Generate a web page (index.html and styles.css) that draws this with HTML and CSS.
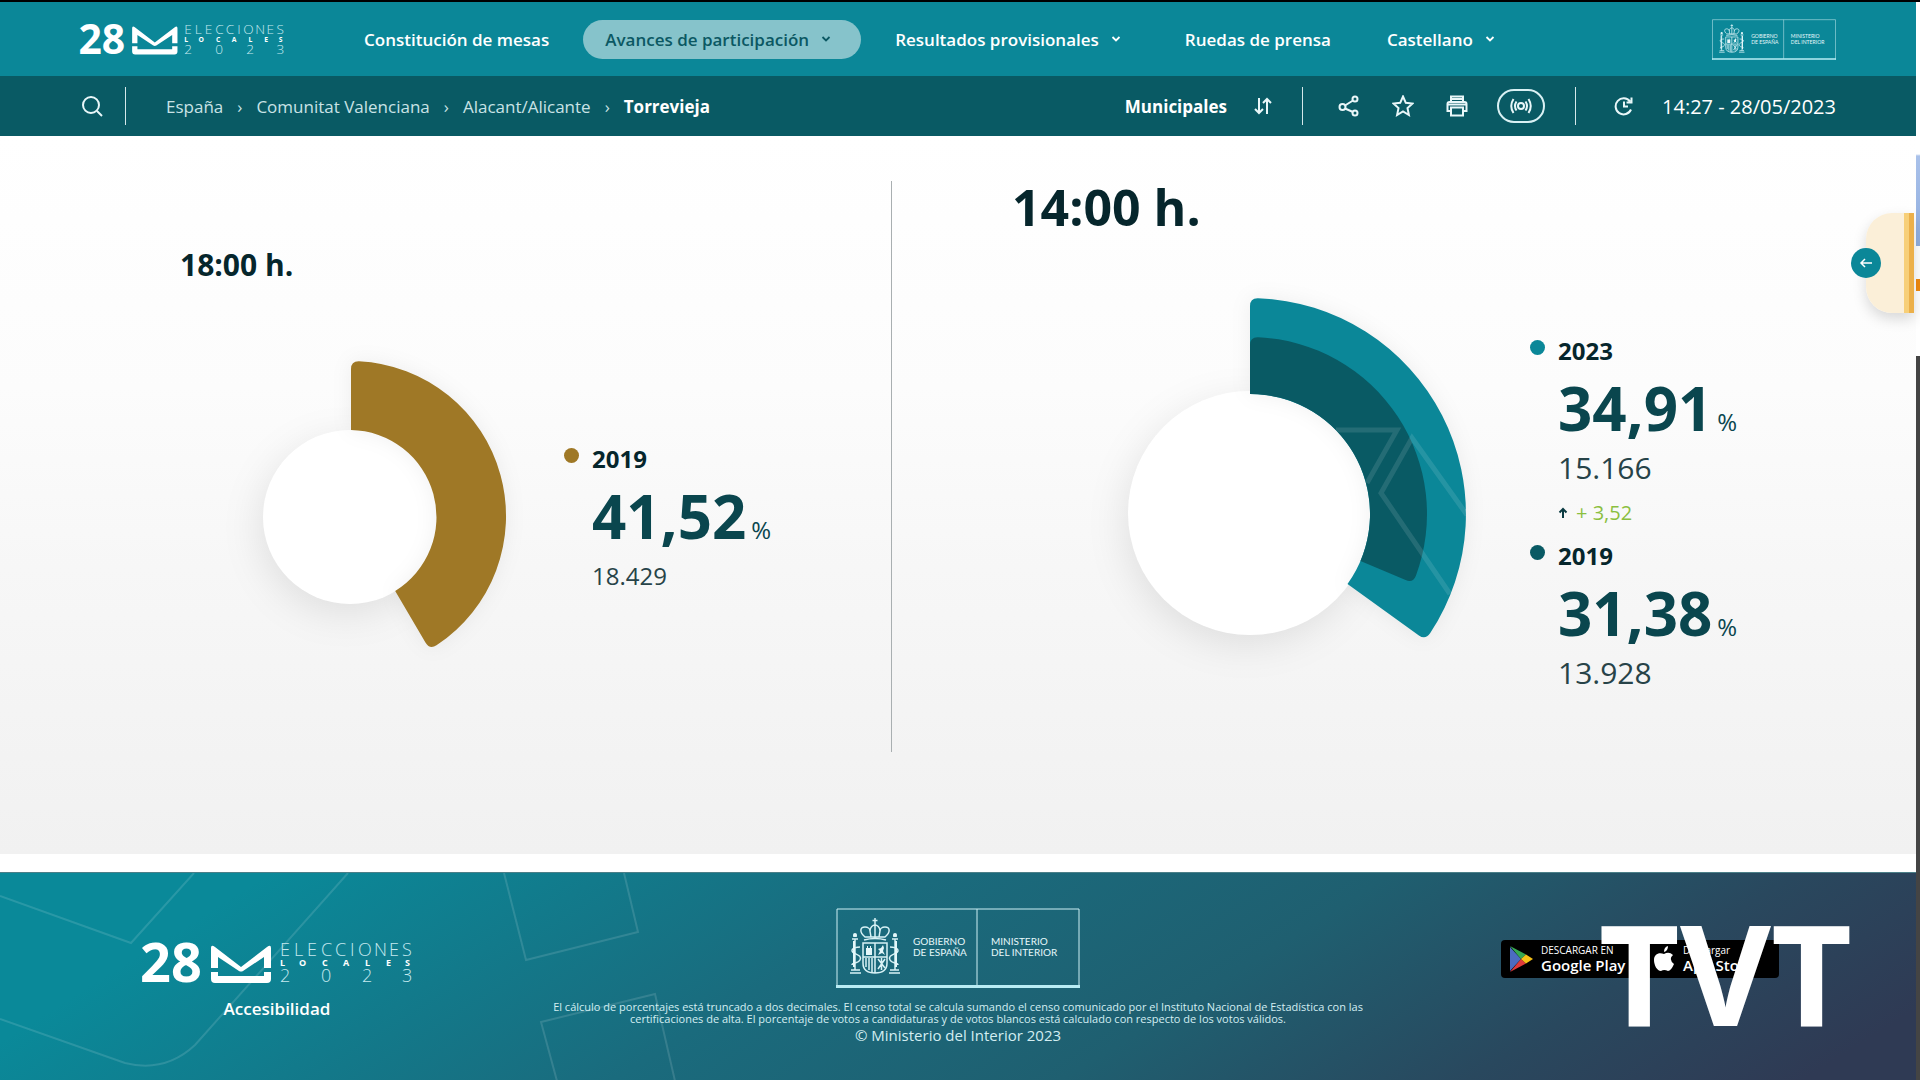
FILE: index.html
```html
<!DOCTYPE html>
<html lang="es">
<head>
<meta charset="utf-8">
<meta name="viewport" content="width=device-width, initial-scale=1">
<title>Elecciones Locales 2023 - Torrevieja</title>
<link rel="stylesheet" href="styles.css">
</head>
<body>
<svg class="defs" aria-hidden="true">
  <symbol id="logo" viewBox="0 0 270 40">
    <text class="logo-day" x="-2" y="39">28</text>
    <path d="M69 25V5q0-4 4-1L99 24 125 4q4-3 4 1V25h-7V14L101 28q-2 1-4 0L76 14V25zM69 29h7v4h46v-4h7v7q0 4-4 4H73q-4 0-4-4z" fill="#fff"/>
    <text class="logo-thin" x="138 152 165 179 193 208 216 232 247 260" y="13">ELECCIONES</text>
    <text class="logo-local" x="138 157 180 201 223 244 263" y="23">LOCALES</text>
    <text class="logo-thin" x="138 179 220 260" y="39">2023</text>
  </symbol>
  <symbol id="gov" viewBox="0 0 244 80">
    <g fill="none" stroke="#cdeff4">
      <path d="M1 80V1H243V80M141 1V78"/>
      <path d="M0 78.500H244" stroke="#b9ecf4" stroke-width="3"/>
    </g>
    <g fill="none" stroke="#d8f2f6" stroke-width="1.500">
      <path d="M39 10v7M36.500 12.500h5"/>
      <path d="M29 29c-6-5-5-10 0-10 3 0 5 2 5 4 0-4 3-6 5-6s5 2 5 6c0-2 2-4 5-4 5 0 6 5 0 10zM34 23l1 6M44 23l-1 6M39 17v12M28 32q11-3 22 0"/>
      <path d="M27 35h24v20q0 10-12 10T27 55zM39 35v30M27 49h24"/>
      <path d="M30 50v9M33 50v12M36 50v14M42 51l7 9M49 51l-7 10M45.500 50v12"/>
      <path d="M19 31v31M16 31h6M17 28h4M15 62h9M14 65h11M59 31v31M56 31h6M57 28h4M54 62h9M53 65h11"/>
      <path d="M24 39c-8 0-10 4-6 6s8 3 6 7-8 2-8 5M54 39c8 0 10 4 6 6s-8 3-6 7 8 2 8 5"/>
    </g>
    <g fill="#e4f7fa">
      <path d="M30 47v-7h1v-2h1v2h2v-2h1v2h1v7zM42 47l2-4-2-2 3-1 2-3 1 3-1 3 2 4-3-2z"/>
      <circle cx="19" cy="27" r="2"/><circle cx="59" cy="27" r="2"/>
      <path d="M17 33h2v26h-2zM59 33h2v26h-2z"/>
    </g>
    <text class="gov-text" x="77" y="37">GOBIERNO</text>
    <text class="gov-text" x="77" y="48">DE ESPAÑA</text>
    <text class="gov-text" x="155" y="37">MINISTERIO</text>
    <text class="gov-text" x="155" y="48">DEL INTERIOR</text>
  </symbol>
  <symbol id="chevron" viewBox="0 0 10 10"><path d="M1.500 3 5 6.500 8.500 3" fill="none" stroke="currentColor" stroke-width="1.800"/></symbol>
</svg>

<div class="frame">
  <div class="page">
    <header class="topbar">
      <a href="#" class="brand" aria-label="28M Elecciones Locales 2023"><svg class="brand-logo"><use href="#logo"/></svg></a>
      <nav class="nav">
        <a href="#" class="nav-item">Constitución de mesas</a>
        <button class="nav-item active">Avances de participación<svg class="chev"><use href="#chevron"/></svg></button>
        <button class="nav-item">Resultados provisionales<svg class="chev"><use href="#chevron"/></svg></button>
        <a href="#" class="nav-item">Ruedas de prensa</a>
        <button class="nav-item">Castellano<svg class="chev"><use href="#chevron"/></svg></button>
      </nav>
      <a href="#" class="gov-link" aria-label="Gobierno de España"><svg class="gov-small"><use href="#gov"/></svg></a>
    </header>

    <div class="subbar">
      <button class="icon-btn" aria-label="Buscar"><svg width="24" height="24" viewBox="0 0 24 24"><circle cx="11" cy="11" r="8"/><path d="M17 17l5 5"/></svg></button>
      <span class="rule rule-search"></span>
      <nav class="crumbs">
        <a href="#">España</a><span>›</span><a href="#">Comunitat Valenciana</a><span>›</span><a href="#">Alacant/Alicante</a><span>›</span><strong>Torrevieja</strong>
      </nav>
      <button class="election">Municipales<svg width="20" height="20" viewBox="0 0 20 20"><path d="M6 2v15M2 13l4 4 4-4M14 18V3M10 7l4-4 4 4"/></svg></button>
      <span class="rule"></span>
      <div class="tools">
        <button class="icon-btn" aria-label="Compartir"><svg width="22" height="22" viewBox="0 0 22 22"><circle cx="4.500" cy="12" r="3"/><circle cx="17" cy="4" r="2.500"/><circle cx="17" cy="18" r="2.500"/><path d="M7 10.500 15 5.500M7 13.500l8 3.500"/></svg></button>
        <button class="icon-btn" aria-label="Favoritos"><svg width="22" height="22" viewBox="0 0 22 22"><path d="M11 1.500l2.800 6.300 6.700.7-5 4.600 1.400 6.900-5.900-3.500L5.100 20l1.400-6.900-5-4.600 6.700-.7z"/></svg></button>
        <button class="icon-btn" aria-label="Imprimir"><svg width="22" height="22" viewBox="0 0 22 22"><path d="M5 7V1.500h12V7M5 16H1.500V9q0-2 2-2h15q2 0 2 2v7H17M5 12.500h12v8H5z"/><path d="M5 4h12M2 9.500h18" stroke-width="2"/></svg></button>
        <button class="live" aria-label="En directo"><svg width="22" height="18" viewBox="0 0 22 18"><circle cx="11" cy="9" r="3"/><path d="M6.500 4.500q-3 4.500 0 9M15.500 4.500q3 4.500 0 9M3.500 2q-4.500 7 0 14M18.500 2q4.500 7 0 14"/></svg></button>
      </div>
      <span class="rule"></span>
      <button class="icon-btn refresh" aria-label="Actualizar"><svg width="20" height="20" viewBox="0 0 20 20"><path d="M17 13.500A8 8 0 1 1 16 5.500M17.500 1.500V6.500H12.500M10 5.500V10.500H14"/></svg></button>
      <time datetime="2023-05-28T14:27">14:27 - 28/05/2023</time>
    </div>

    <main class="results">
      <section class="panel panel-past">
        <h2>18:00 h.</h2>
        <div class="chart-row">
          <svg class="donut" width="243" height="310" viewBox="0 0 243 310" role="img" aria-label="41,52 %">
            <circle class="hub" cx="87" cy="156" r="87"/>
            <path class="slice" fill="#9f7826" d="M88 69V8Q88 0 96 .2A155 155 0 0 1 173.500 284.300Q166.700 288.500 162.600 281.700L132.200 230A87 87 0 0 0 88 69z"/>
          </svg>
          <div class="legend">
            <h3><i class="dot gold"></i>2019</h3>
            <p class="pct">41,52<span>%</span></p>
            <p class="votes">18.429</p>
          </div>
        </div>
      </section>
      <section class="panel panel-now">
        <h2>14:00 h.</h2>
        <div class="chart-row">
          <svg class="donut" width="337" height="432" viewBox="0 0 337 432" role="img" aria-label="34,91 %">
            <clipPath id="slice-clip"><path d="M121 96V8Q121 0 129 .2A216 216 0 0 1 301.100 335.200Q296.400 342 289.900 337.400L218.500 286A120 120 0 0 0 121 96z"/></clipPath>
            <circle class="hub" cx="121" cy="215" r="122"/>
            <path class="slice" fill="#0b8798" d="M121 96V8Q121 0 129 .2A216 216 0 0 1 301.100 335.200Q296.400 342 289.900 337.400L218.500 286A120 120 0 0 0 121 96z"/>
            <path fill="#095a64" d="M121 96V47Q121 39 129 39.200A177 177 0 0 1 286.900 277.700Q283.900 285.200 276.600 282L231.500 262.900A120 120 0 0 0 121 96z"/>
            <path class="pattern" clip-path="url(#slice-clip)" d="M207 132H268L238 185M338 217 283 140 252 195 321 296"/>
          </svg>
          <div class="legend">
            <h3><i class="dot teal"></i>2023</h3>
            <p class="pct">34,91<span>%</span></p>
            <p class="votes">15.166</p>
            <p class="diff"><svg width="10" height="12" viewBox="0 0 10 12"><path d="M5 11V2M1.500 5.500 5 2l3.500 3.500" fill="none" stroke="#0b3b42" stroke-width="2"/></svg>+ 3,52</p>
            <h3><i class="dot deep"></i>2019</h3>
            <p class="pct">31,38<span>%</span></p>
            <p class="votes">13.928</p>
          </div>
        </div>
      </section>
      <aside class="drawer"><button aria-label="Abrir panel"><svg width="14" height="12" viewBox="0 0 14 12"><path d="M13 6H2M6 2 2 6l4 4" fill="none" stroke="#fff" stroke-width="1.500"/></svg></button></aside>
    </main>

    <footer class="footer">
      <svg class="footer-lines" viewBox="0 0 1916 208" preserveAspectRatio="xMinYMin slice" aria-hidden="true"><path d="M0 23 131 70 194 0M348 0 195 172Q165 200 125 190L0 146M504 0 526 87 638 59 624 0M557 208 541 149 655 121 675 208"/></svg>
      <div class="foot-brand">
        <svg class="foot-logo" role="img" aria-label="28M Elecciones Locales 2023"><use href="#logo"/></svg>
        <a href="#">Accesibilidad</a>
      </div>
      <div class="foot-center">
        <svg class="gov-large" role="img" aria-label="Gobierno de España, Ministerio del Interior"><use href="#gov"/></svg>
        <p class="legal">El cálculo de porcentajes está truncado a dos decimales. El censo total se calcula sumando el censo comunicado por el Instituto Nacional de Estadística con las certificaciones de alta. El porcentaje de votos a candidaturas y de votos blancos está calculado con respecto de los votos válidos.</p>
        <p class="copy">© Ministerio del Interior 2023</p>
      </div>
      <div class="stores">
        <a href="#" class="store"><svg width="24" height="28" viewBox="0 0 24 28"><path d="M1 2v24L12 14z" fill="#4c6cc0"/><path d="M1 1 17 9.500 12 14z" fill="#36a852"/><path d="M1 27 17 18.500 12 14z" fill="#df3b3b"/><path d="M17 9.500 24 14 17 18.500 12 14z" fill="#f6c117"/></svg><span><small>DESCARGAR EN</small><b>Google Play</b></span></a>
        <a href="#" class="store"><svg width="22" height="28" viewBox="0 0 22 28"><path d="M15 1q0 5-4 6 0-5 4-6zM11 9q5-3 9 1-5 4 1 9-3 7-6 7-4-2-7 0C4 26 1 20 1 15c0-6 5-8 10-6z" fill="#fff"/></svg><span><small>Descargar</small><b>App Store</b></span></a>
      </div>
      <div class="channel">TVT</div>
    </footer>
  </div>
  <div class="edge"></div>
</div>
</body>
</html>
```
FILE: styles.css
```css
* { box-sizing: border-box; }
body {
  margin: 0;
  font-family: "Open Sans", "Noto Sans", sans-serif;
  color: #06262c;
  background: #fff;
}
h2, h3, p { margin: 0; }
a { color: inherit; text-decoration: none; }
button { font: inherit; color: inherit; background: none; border: 0; padding: 0; cursor: pointer; }
svg { display: block; flex: none; }
symbol, .brand-logo, .foot-logo, .gov-small, .gov-large { overflow: visible; }
.defs { position: absolute; width: 0; height: 0; }

.frame { display: flex; min-height: 100vh; border-top: 2px solid #000; }
.page { flex: 1; min-width: 0; display: flex; flex-direction: column; }
.edge {
  width: 4px;
  background: linear-gradient(#fff 152px, #a9c1ea 154px, #8fadde 244px, #fff 244px, #fff 277px, #f08a10 277px, #f08a10 289px, #fff 289px, #fff 354px, #444 354px);
}

/* shared logos */
.logo-day { font: 700 54px "Open Sans", sans-serif; fill: #fff; }
.logo-thin { font: 300 18px "Open Sans", sans-serif; fill: #c5e9ef; }
.logo-local { font: 700 9px "Open Sans", sans-serif; fill: #fff; }
.gov-text { font: 400 10px Lato, sans-serif; fill: #e6f8fb; }

/* top bar */
.topbar { display: flex; align-items: center; height: 74px; padding: 0 80px; background: #0b8798; color: #fff; }
.brand-logo { width: 204px; height: 31px; }
.nav { display: flex; gap: 12px; margin-left: 58px; }
.nav-item { display: flex; align-items: center; gap: 12px; height: 39px; padding: 0 22px; border-radius: 20px; font-size: 17px; font-weight: 600; white-space: nowrap; }
.nav-item.active { background: #86c3cb; color: #0b5863; }
.chev { width: 10px; height: 10px; margin-right: 8px; }
.gov-link { margin-left: auto; }
.gov-small { width: 124px; height: 41px; }

/* location bar */
.subbar { display: flex; align-items: center; height: 60px; padding: 0 80px; background: #095a64; color: #fff; font-size: 17px; white-space: nowrap; }
.subbar svg { fill: none; stroke: #e9f7f9; stroke-width: 2; }
.rule { width: 1px; height: 38px; background: #d5e8ea; }
.rule-search { margin: 0 40px 0 21px; }
.crumbs { display: flex; gap: 14px; color: #c9e3e6; }
.crumbs strong { color: #fff; }
.election { display: flex; align-items: center; gap: 26px; margin: 0 29px 0 auto; font-weight: 700; }
.tools { display: flex; align-items: center; gap: 27px; margin: 0 30px 0 32px; }
.tools .icon-btn { display: grid; place-items: center; width: 27px; }
.live { display: grid; place-items: center; width: 48px; height: 34px; border: 2px solid #d9f1f4; border-radius: 17px; }
.refresh { margin: 0 28px 0 38px; }
.subbar time { font-size: 20px; }

/* results */
.results { position: relative; display: grid; grid-template-columns: 891fr 1025fr; padding: 45px 0 102px; background: linear-gradient(#fff, #fcfcfc 35%, #f7f7f7 60%, #f1f1f1); }
.panel-past { padding: 64px 0 0 180px; }
.panel-now { padding: 0 0 22px 120px; border-left: 1px solid #a9afb1; }
.panel-past h2 { font-size: 30px; line-height: 40px; }
.panel-now h2 { font-size: 50px; line-height: 52px; }
.chart-row { display: flex; align-items: flex-start; }
.panel-past .chart-row { gap: 58px; padding: 76px 0 0 83px; }
.panel-now .chart-row { gap: 64px; padding: 65px 0 0 117px; }
.donut { overflow: visible; }
.hub { fill: #fff; filter: drop-shadow(-4px 10px 18px rgba(0, 0, 0, .09)); }
.slice { filter: drop-shadow(0 0 10px rgba(0, 0, 0, .06)); }
.pattern { fill: none; stroke: #fff; stroke-opacity: .11; stroke-width: 5; }
.panel-past .legend { padding-top: 82px; }
.panel-now .legend { padding-top: 37px; }
.legend h3 { display: flex; gap: 13px; font-size: 24px; line-height: 32px; }
.dot { width: 15px; height: 15px; margin-top: 5px; border-radius: 50%; }
.gold { background: #9f7826; }
.teal { background: #0b8798; }
.deep { background: #095a64; }
.pct { display: flex; align-items: baseline; gap: 5px; margin: 5px 0 6px 28px; font-size: 60px; line-height: 72px; font-weight: 700; color: #0a464e; }
.pct span { font-size: 24px; line-height: 24px; font-weight: 400; }
.votes { margin-left: 28px; font-size: 24px; line-height: 36px; color: #274348; }
.panel-now .votes { font-size: 30px; }
.diff { display: flex; align-items: center; gap: 8px; margin: 13px 0 13px 28px; font-size: 20px; line-height: 28px; color: #8bbf3f; }

.drawer { position: absolute; top: 77px; right: 2px; width: 48px; height: 100px; border-radius: 26px 0 0 26px; border-right: 5px solid #ecb04a; background: linear-gradient(90deg, #fbefd8 38px, #f7cf78 38px); box-shadow: 0 6px 14px rgba(0, 0, 0, .15); }
.drawer button { position: absolute; left: -15px; top: 35px; display: grid; place-items: center; width: 30px; height: 30px; border-radius: 50%; background: #0b8798; }

/* footer */
.footer { position: relative; flex: 1; display: grid; grid-template-columns: 1fr auto 1fr; align-items: start; gap: 20px; margin-top: 18px; padding: 35px 137px 20px; border-top: 1px solid #4b7f88; background: linear-gradient(148deg, #0a8999 12%, #1a6b7d 42%, #1f5f70 62%, #29485e 80%, #2f3a54 95%); color: #fff; overflow: hidden; }
.footer > * { position: relative; }
.footer .footer-lines { position: absolute; inset: 0; width: 100%; height: 100%; fill: none; stroke: #fff; stroke-opacity: .13; stroke-width: 2; }
.foot-brand { display: flex; flex-direction: column; align-items: center; justify-self: start; gap: 14px; padding: 35px 0 0 5px; font-size: 17px; font-weight: 600; line-height: 24px; }
.foot-logo { width: 270px; height: 40px; }
.foot-center { display: flex; flex-direction: column; align-items: center; width: 840px; text-align: center; }
.gov-large { width: 244px; height: 80px; }
.legal { margin-top: 13px; font-size: 11px; line-height: 12px; color: #d3eef2; }
.copy { font-size: 15px; line-height: 20px; color: #d3eef2; }
.stores { display: flex; justify-self: end; gap: 10px; padding-top: 32px; }
.store { display: flex; align-items: center; gap: 8px; width: 134px; height: 38px; padding: 0 8px; border-radius: 4px; background: #000; }
.store small, .store b { display: block; white-space: nowrap; }
.store small { font-size: 10px; line-height: 12px; }
.store b { font-size: 15px; line-height: 18px; font-weight: 600; }
.footer .channel { position: absolute; right: 64px; top: 43px; font-size: 140px; line-height: 112px; font-weight: 700; color: #fff; }
```
